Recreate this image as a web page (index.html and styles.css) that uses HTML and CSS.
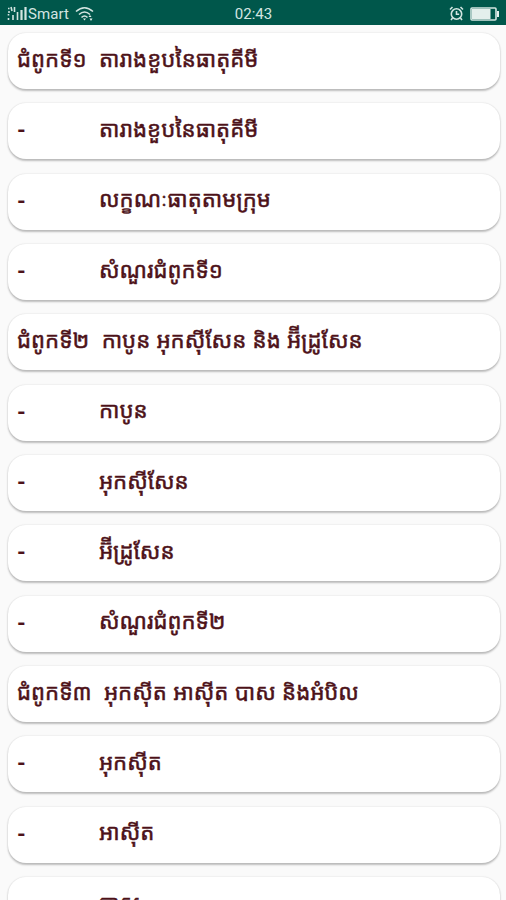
FILE: index.html
```html
<!DOCTYPE html>
<html lang="km">
<head>
    <meta charset="UTF-8">
    <meta name="viewport" content="width=device-width, initial-scale=1.0">
    <title>តារាងខួបនៃធាតុគីមី</title>
    <link rel="stylesheet" href="styles.css">
</head>
<body>
    <header class="status-bar">
        <div class="carrier">
            <svg class="signal" width="21" height="15" viewBox="0 0 21 15">
                <path d="M1 2.500h1.500M4 1l1 4M7.500 1v5M1 6h2M1.500 8v1.500M1.500 12v2M6 9v5M10.500 6v8" />
                <path class="bars" d="M14.500 4v10M18.500 1v13" />
            </svg>
            <span class="carrier-name">Smart</span>
            <svg class="wifi" width="20" height="16" viewBox="0 0 20 16">
                <path d="M1 5.500Q9.500-2 18 5.500M4 8.500Q9.500 3.500 15 8.500M6.500 11.500Q9.500 8.500 12.500 11.500" />
                <path class="solid" d="M8 12.500h3l-1.500 2zM13.500 11l1.500-2 1.500 2zM14.500 12.500h3l-1.500 2.500z" />
            </svg>
        </div>
        <span class="clock">02:43</span>
        <div class="indicators">
            <svg class="alarm" width="15" height="15" viewBox="0 0 15 15">
                <circle cx="7.500" cy="8" r="5.200" />
                <path d="M7.500 5v3.300h2.700M1 3.500L3.500 1M11.500 1L14 3.500M3.500 12L2 14M11.500 12l1.500 2" />
            </svg>
            <svg class="battery" width="30" height="14" viewBox="0 0 30 14">
                <rect x="1" y="1" width="25" height="12" rx="1" />
                <rect class="solid" x="2" y="2" width="18.500" height="10" />
                <path class="solid" d="M27 4h2v6h-2z" />
            </svg>
        </div>
    </header>

    <main class="list">
        <div class="card"><span class="chapter">ជំពូកទី១</span><span>តារាងខួបនៃធាតុគីមី</span></div>
        <div class="card"><span class="dash">-</span><span>តារាងខួបនៃធាតុគីមី</span></div>
        <div class="card"><span class="dash">-</span><span>លក្ខណៈធាតុតាមក្រុម</span></div>
        <div class="card"><span class="dash">-</span><span>សំណួរជំពូកទី១</span></div>
        <div class="card"><span class="chapter">ជំពូកទី២</span><span>កាបូន អុកស៊ីសែន និង អ&zwnj;៊ីដ្រូសែន</span></div>
        <div class="card"><span class="dash">-</span><span>កាបូន</span></div>
        <div class="card"><span class="dash">-</span><span>អុកស៊ីសែន</span></div>
        <div class="card"><span class="dash">-</span><span>អ&zwnj;៊ីដ្រូសែន</span></div>
        <div class="card"><span class="dash">-</span><span>សំណួរជំពូកទី២</span></div>
        <div class="card"><span class="chapter">ជំពូកទី៣</span><span>អុកស៊ីត អាស៊ីត បាស និងអំបិល</span></div>
        <div class="card"><span class="dash">-</span><span>អុកស៊ីត</span></div>
        <div class="card"><span class="dash">-</span><span>អាស៊ីត</span></div>
        <div class="card"><span class="dash">-</span><span>បាស</span></div>
    </main>
</body>
</html>
```
FILE: styles.css
```css
* {
    margin: 0;
    padding: 0;
    box-sizing: border-box;
}

body {
    height: 100vh;
    overflow: hidden;
    background: #fafafa;
    color: #4d1219;
    font-family: Roboto, sans-serif;
}

.status-bar {
    display: grid;
    grid-template-columns: 1fr auto 1fr;
    align-items: center;
    height: 25px;
    padding: 2px 6px 0 7px;
    background: #00574b;
    color: #d3e5e1;
    font-size: 15px;
}

.carrier,
.indicators {
    display: flex;
    align-items: center;
}

.carrier-name {
    letter-spacing: 0.1px;
}

.indicators {
    justify-content: flex-end;
    gap: 6px;
}

.wifi {
    margin-left: 6px;
}

.status-bar svg {
    fill: none;
    stroke: #d3e5e1;
    stroke-width: 1.6;
}

.status-bar .bars {
    stroke-width: 2.2;
}

.status-bar .solid {
    fill: #e4efec;
    stroke: none;
}

.list {
    display: flex;
    flex-direction: column;
    gap: 14.35px;
    padding: 8px 6px 0 8px;
}

.card {
    display: flex;
    flex: none;
    align-items: center;
    height: 56px;
    padding: 0 9px 7px;
    background: #fff;
    border-radius: 18px;
    box-shadow: 0 1.5px 2px rgba(0, 0, 0, 0.24), 0 0 2px rgba(0, 0, 0, 0.1);
    font-family: "Noto Sans Khmer", "Khmer OS", serif;
    font-size: 22.15px;
    line-height: 30px;
    white-space: nowrap;
    word-spacing: 0.6px;
    -webkit-text-stroke: 0.5px #4d1219;
}

.chapter {
    margin-right: 12.5px;
}

.dash {
    width: 82px;
    padding-top: 5px;
    font-family: Roboto, sans-serif;
    font-weight: bold;
    -webkit-text-stroke: 0;
}
```
